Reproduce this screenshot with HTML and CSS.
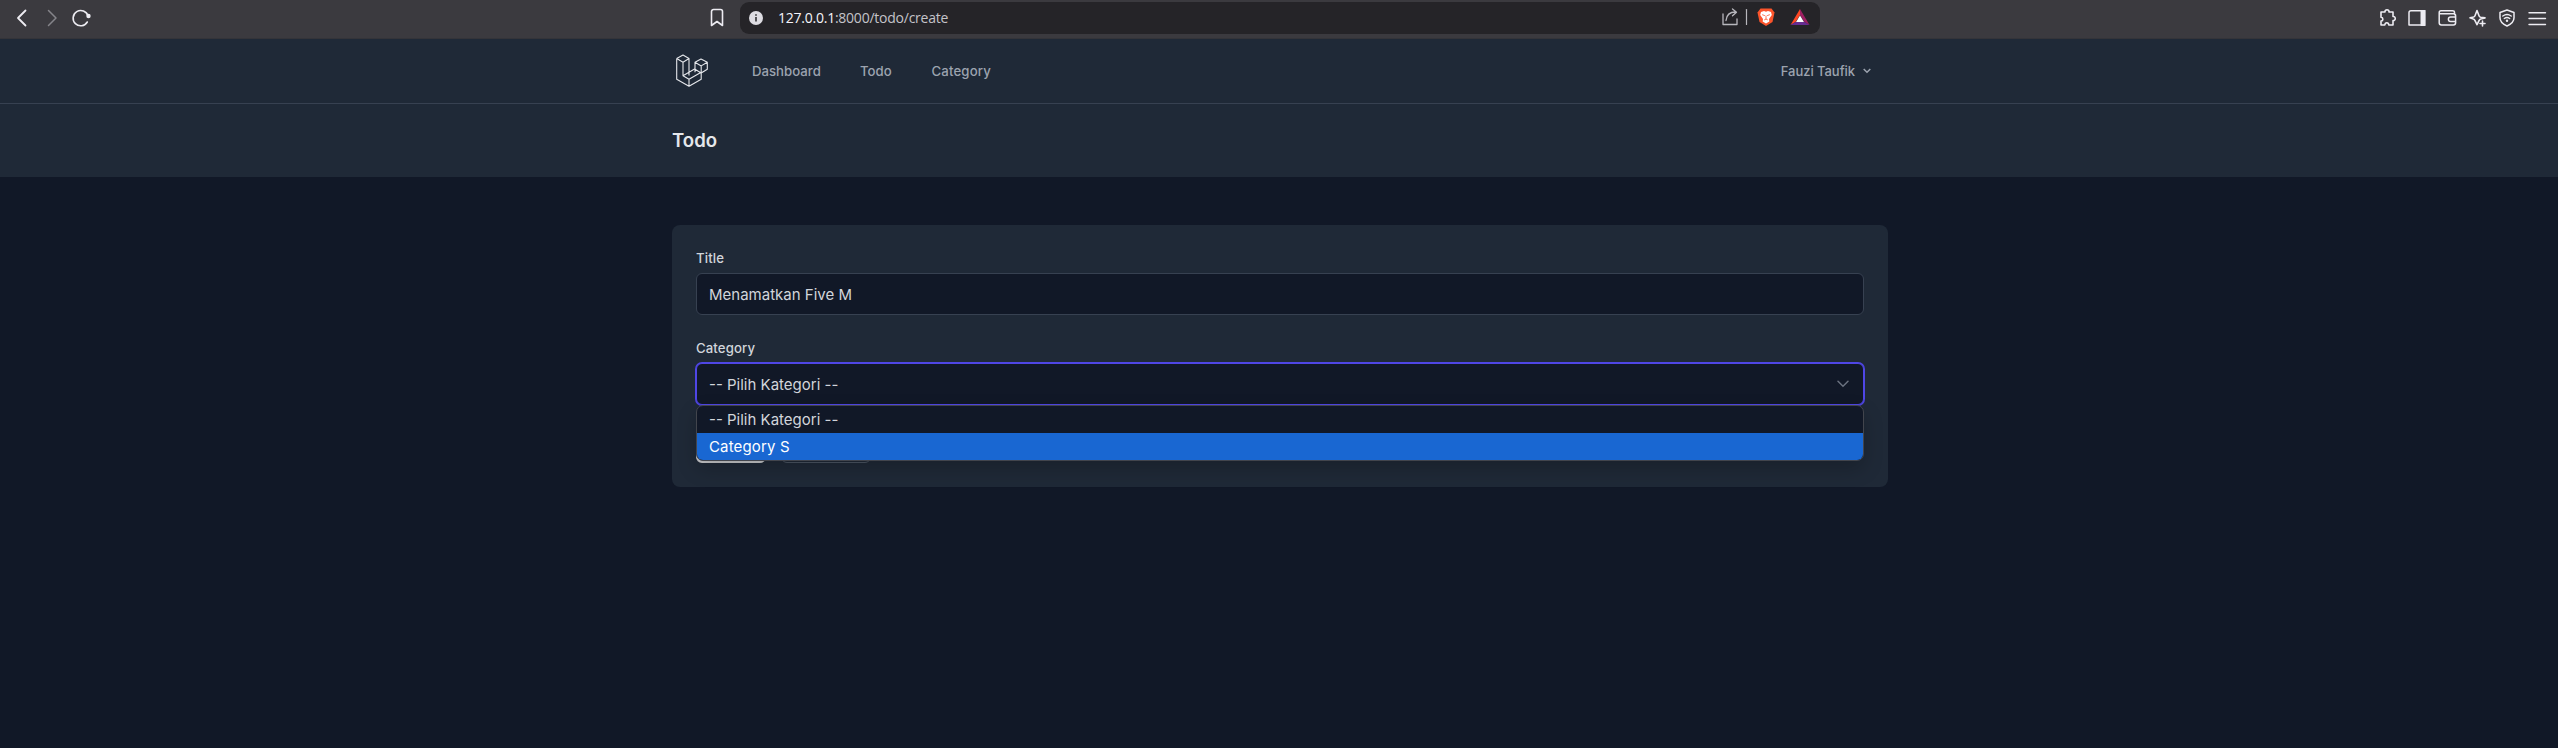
FILE: index.html
```
<!DOCTYPE html>
<html lang="en">
<head>
<meta charset="utf-8">
<title>Todo</title>
<link rel="stylesheet" href="styles.css">
</head>
<body>
<div class="toolbar">
  <div class="tools-left">
    <svg class="icon" width="100" height="38" viewBox="0 0 100 38"><path d="M25.500 10.500 18 18l7.500 7.500" stroke-width="1.8"/><path class="dim" d="M48.500 10.500 56 18l-7.500 7.500" stroke-width="1.500"/><path d="M87.300 22a7.600 7.600 0 1 1 .7-6" stroke-width="1.600"/><circle class="solid" cx="88.500" cy="16" r="2.200"/></svg>
  </div>
  <svg class="icon bookmark" width="16" height="20" viewBox="0 0 16 20"><path d="M2.500 3.500a2 2 0 0 1 2-2h7a2 2 0 0 1 2 2v14L8 13.500 2.500 17.500z" stroke-width="1.600"/></svg>
  <div class="address">
    <svg class="info" width="14" height="14" viewBox="0 0 14 14"><circle cx="7" cy="7" r="7" fill="#dddce2"/><path d="M7 6v4.500M7 3.200v1.500" stroke="#252428" stroke-width="1.500"/></svg>
    <span class="url"><b>127.0.0.1</b>:8000/todo/create</span>
    <svg class="icon address-tools" width="94" height="32" viewBox="0 0 94 32"><path class="soft" d="M2 12v10.500h14V17M5 18.500c.5-5.500 4-8.500 9.500-8.500M11.500 7l4 3.200-4 3.500" stroke-width="1.300"/><path class="soft" d="M25.500 7.500v15" stroke-width="1.200"/><path d="M39.500 6.500h11l3 4-2 9.500-6.500 4-6.500-4-2-9.500z" fill="#fb542b" stroke="none"/><path d="m40 10 3-1 2 .8 2-.8 3 1 .8 3-2.800 4 .3 2.500-3.300 2-3.300-2 .3-2.500-2.800-4z" fill="#fff" stroke="none"/><path d="m41.500 12.800 2 .7M48.500 12.800l-2 .7M43.500 17.800l1.500-.8 1.500.8M45 14v3" stroke="#fb542b" stroke-width=".8"/><path d="M79 7 69.500 23l5-3L79 13z" fill="#ff4724" stroke="none"/><path d="m79 7 9.500 16-5-3-4.500-7z" fill="#9e1f63" stroke="none"/><path d="m69.500 23 5-3h9l5 3z" fill="#662d91" stroke="none"/><path d="m79 13.500 4 6.500h-8z" fill="#fff" stroke="none"/></svg>
  </div>
  <svg class="icon tools-right" width="182" height="38" viewBox="0 0 182 38">
    <path d="M4 12h4c-.5-3 4.500-3 4 0h4v4.500c3-.5 3 4.300 0 4V25h-4.200c-.2-3-3.700-3-4 0H4v-4c2.500-.2 2.500-3.500 0-3.700z" stroke-width="1.600"/>
    <path d="M35 10.700h12.500V25H32V12.500q0-1.800 2-1.800z" stroke-width="1.500"/><path class="solid" d="M43.500 10h5v16h-5z"/>
    <path d="M77.500 14.500v-2q0-1.700-2-1.700H64q-1.800 0-1.800 2v10q0 2.200 2.200 2.200h12q2.200 0 2.200-2.200v-7q0-2-2-2H63M78.500 17h-4.800q-2.300 0-2.300 2.200t2.300 2.300h4.800" stroke-width="1.500"/>
    <path d="m100 10.500 2 5.300q.4 1.200 1.700 1.500l4.300.6-4.300 1.200q-1.300.4-1.700 1.600l-2 4-2-4q-.4-1.300-1.700-1.700L93 17.800l3.600-.8q1-.3 1.400-1.300zM105.500 21v5M103 23.500h5" stroke-width="1.600"/>
    <path d="m130 10 7 2.500v5.300q0 5.200-7 8.200-7-3-7-8.200v-5.300z" stroke-width="1.500"/><path d="M125.800 16q4.200-3 8.400 0M127.300 18.500q2.700-2 5.400 0" stroke-width="1.400"/><circle class="solid" cx="130" cy="20.800" r="1.200"/>
    <path d="M152 12.700h16.500M152 18.500h16.500M152 24.500h16.500" stroke-width="1.400"/>
  </svg>
</div>
<nav class="nav">
  <div class="container nav-row">
    <svg class="logo" width="32" height="34" viewBox="0 0 32 34"><path d="M.7 4.500 7 1l6 3.500v17M.7 4.500v20.700l12.300 7 12.200-7V18M.7 4.500 7 8.200l6-3.700M7 8.200v13.600l6 3.500 12.200-7M13 25.300v6.900M7 21.800l12-7M19 18.200V8.300L25 5l6.300 3.300v7L25.200 19 19 15.200M19 8.300l6.200 3.600 6.100-3.600M25.200 11.900V19"/></svg>
    <a class="link dashboard">Dashboard</a>
    <a class="link todo">Todo</a>
    <a class="link category">Category</a>
    <div class="user"><span>Fauzi Taufik</span><svg width="8" height="6" viewBox="0 0 8 6"><path d="m.7 1 3.300 3.300L7.300 1"/></svg></div>
  </div>
</nav>
<header class="header"><div class="container"><h2>Todo</h2></div></header>
<main class="container main">
  <form class="card">
    <label class="label">Title</label>
    <div class="field">Menamatkan Five M</div>
    <label class="label second">Category</label>
    <div class="field select">
      <span>-- Pilih Kategori --</span>
      <svg width="12" height="8" viewBox="0 0 12 8"><path d="m1 1.200 5 5 5-5"/></svg>
      <div class="menu"><div class="option">-- Pilih Kategori --</div><div class="option active">Category S</div></div>
    </div>
    <div class="actions"><span class="save"></span><span class="cancel"></span></div>
  </form>
</main>
</body>
</html>
```
FILE: styles.css
```
* { box-sizing: border-box; }
html { background: #111827; overflow: hidden; }
body { margin: 0; width: 2560px; height: 748px; overflow: hidden; font-family: Inter, "Noto Sans", sans-serif; background: #111827; color: #d1d5db; }
svg { display: block; flex: none; }
.toolbar { height: 39px; display: flex; align-items: flex-start; background: #3b3a3f; border-bottom: 1px solid #343439; }
.tools-left { width: 709px; }
.icon { fill: none; stroke: #edecf2; stroke-linejoin: round; stroke-linecap: round; }
.icon .dim { stroke: #85848a; }
.icon .soft { stroke: #b8b7bd; }
.icon .solid { fill: #edecf2; stroke: none; }
.bookmark { margin-top: 8px; margin-right: 15px; }
.address { width: 1080px; height: 32px; margin-top: 2px; padding-left: 9px; display: flex; align-items: center; background: #252428; border-radius: 9px; }
.url { margin-left: 15px; margin-top: -1px; font: 14px "Open Sans", "Noto Sans", sans-serif; letter-spacing: -.24px; color: #c4c3c9; white-space: nowrap; }
.url b { font-weight: 400; color: #f5f4fa; }
.address-tools { margin-left: auto; margin-right: 5px; }
.tools-right { margin-left: auto; margin-right: 1px; }
.container { width: 1216px; margin: 0 auto; }
.nav { height: 65px; background: #1f2937; border-bottom: 1px solid #374151; }
.nav-row { height: 64px; display: flex; align-items: center; }
.logo { margin: 0 44px 0 4px; fill: none; stroke: #e5e7eb; stroke-width: 1.1; stroke-linejoin: round; }
.link { font-size: 13.2px; font-weight: 500; line-height: 20px; color: #9ca3af; margin-right: 40px; white-space: nowrap; }
.dashboard { width: 68px; }
.todo { width: 31.500px; }
.category { letter-spacing: .15px; }
.user { margin-left: auto; margin-right: 17px; display: flex; align-items: center; gap: 8px; font-size: 13px; font-weight: 500; line-height: 20px; letter-spacing: -.05px; color: #9ca3af; }
.user span { margin-top: -1px; }
.user svg { fill: none; stroke: #9ca3af; stroke-width: 1.5; }
.header { height: 73px; padding: 24px 0; background: #1f2937; }
.header h2 { margin: 0; font-size: 18.6px; line-height: 25px; font-weight: 600; color: #e5e7eb; }
.main { padding-top: 48px; }
.card { display: flex; flex-direction: column; padding: 24px; background: #1f2937; border-radius: 8px; }
.label { font-size: 13.2px; font-weight: 500; line-height: 18px; letter-spacing: .1px; color: #d1d5db; margin-bottom: 6px; }
.second { margin-top: 24px; }
.field { height: 42px; padding: 0 12px; display: flex; align-items: center; font-size: 15px; background: #111827; border: 1px solid #374151; border-radius: 6px; color: #d1d5db; }
.select { position: relative; justify-content: space-between; padding-right: 14px; border-color: #4f46e5; box-shadow: 0 0 0 1px #4f46e5; }
.select svg { fill: none; stroke: #6b7280; stroke-width: 1.5; stroke-linecap: round; }
.menu { position: absolute; left: -1px; right: -1px; top: 41px; height: 56px; overflow: hidden; background: #111827; border: 1px solid #42454d; border-radius: 7px; box-shadow: 0 8px 20px rgba(0,0,0,.2); }
.option { height: 27px; line-height: 28px; padding-left: 12px; }
.active { background: #1967d2; color: #fff; letter-spacing: .15px; }
.actions { display: flex; margin-top: 24px; gap: 15px; }
.save, .cancel { height: 34px; border-radius: 6px; }
.save { width: 70px; background: #c8c9cc; }
.cancel { width: 90px; border: 1px solid #4b5563; }
```
